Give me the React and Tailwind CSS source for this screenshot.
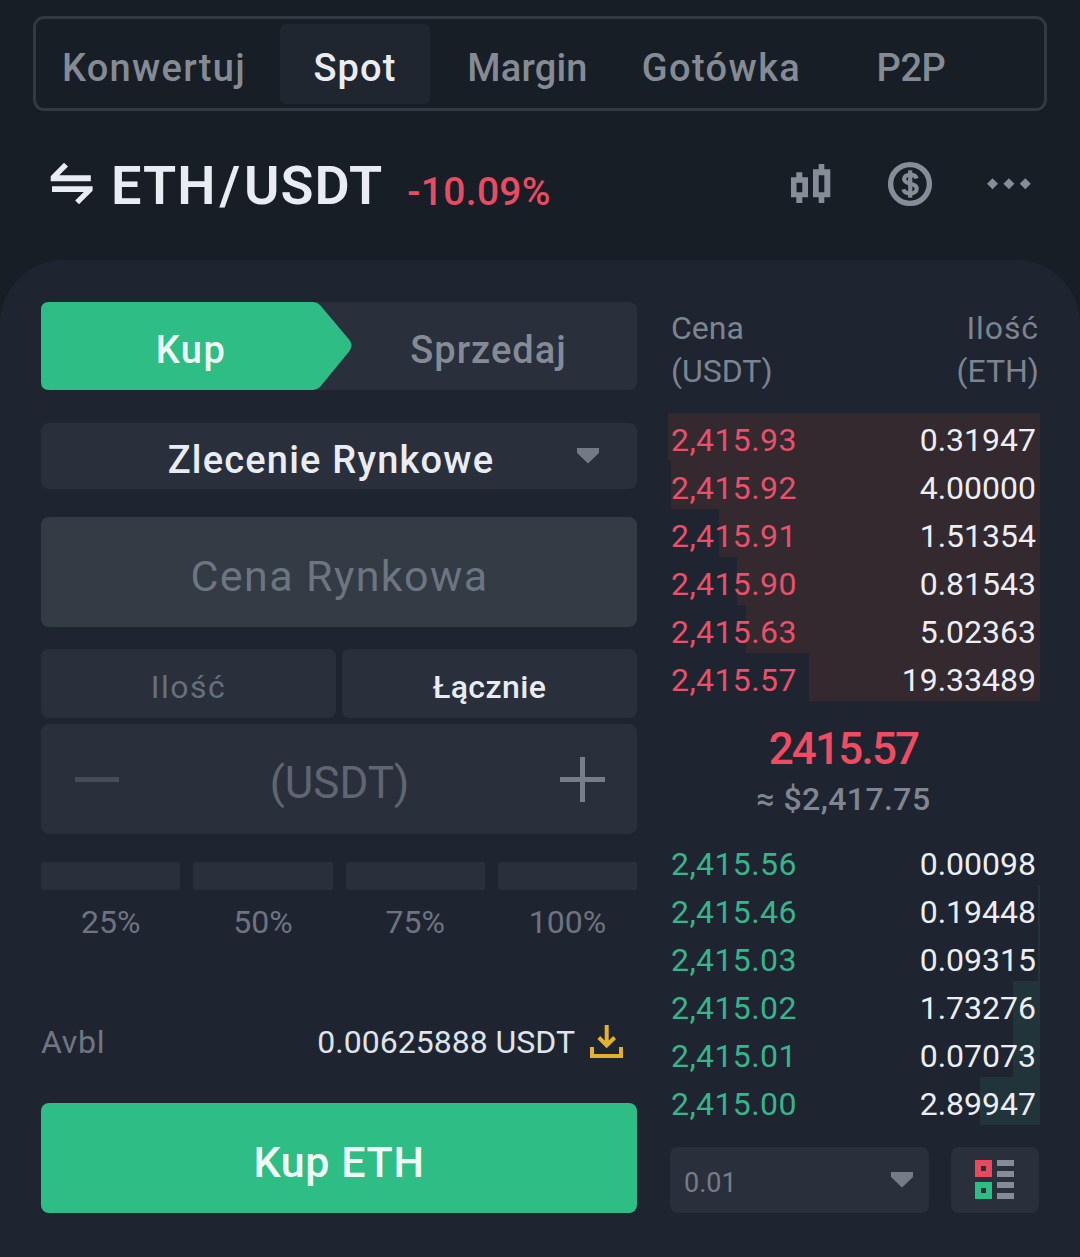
import React, { useState } from "react";
import clsx from "clsx";

const MARKETS = [
  { name: "Konwertuj", box: "w-[236px] mr-2 tracking-[1.3px]" },
  { name: "Spot", box: "w-[150px] tracking-[1.1px]" },
  { name: "Margin", box: "w-[195px] tracking-[0.2px]" },
  { name: "Gotówka", box: "w-[193px] tracking-[1.4px]" },
  { name: "P2P", box: "w-[186px] tracking-[-0.4px]" },
];

// depth = width of the bar behind the row, in px
const ASKS = [
  { price: "2,415.93", amount: "0.31947", depth: 372 },
  { price: "2,415.92", amount: "4.00000", depth: 369 },
  { price: "2,415.91", amount: "1.51354", depth: 321 },
  { price: "2,415.90", amount: "0.81543", depth: 303 },
  { price: "2,415.63", amount: "5.02363", depth: 294 },
  { price: "2,415.57", amount: "19.33489", depth: 231 },
];

const BIDS = [
  { price: "2,415.56", amount: "0.00098", depth: 0 },
  { price: "2,415.46", amount: "0.19448", depth: 2 },
  { price: "2,415.03", amount: "0.09315", depth: 2 },
  { price: "2,415.02", amount: "1.73276", depth: 27 },
  { price: "2,415.01", amount: "0.07073", depth: 27 },
  { price: "2,415.00", amount: "2.89947", depth: 60 },
];

const PERCENTS = ["25%", "50%", "75%", "100%"];

function SwapIcon() {
  return (
    <svg width="44" height="44" viewBox="0 0 44 44" fill="currentColor">
      <path d="M.7 14.2 14 .7 18 4.400 9.300 13.200H40.800V19.300H.700z" />
      <path d="M2 24.300H42.600V28.800L29 42.300 25.200 38.600 33.800 30H2z" />
    </svg>
  );
}

function CandlesIcon() {
  return (
    <svg width="40" height="40" viewBox="0 0 40 40" fill="currentColor">
      <path
        fillRule="evenodd"
        d="M5.3 8.3h6v5H17v20h-5.7V39h-6v-5.7H0v-20h5.3zM5.5 18.7v9.6h5.8v-9.6zM27.7 0h5.6v5.3h6v28h-6V39h-5.6v-5.7H22v-28h5.7zM27.7 11.3v17h5.6v-17z"
      />
    </svg>
  );
}

function DollarIcon() {
  return (
    <svg width="46" height="46" viewBox="0 0 46 46" fill="none" stroke="currentColor">
      <circle cx="23" cy="23" r="19.4" strokeWidth="5.4" />
      <path
        d="M29.6 17.4c-.6-2.4-2.8-3.6-6.4-3.6-3.8 0-6.1 1.6-6.1 4.3 0 6.2 12.6 3.2 12.6 9.6 0 2.9-2.5 4.7-6.5 4.7-3.8 0-6.2-1.4-6.7-4"
        strokeWidth="4.2"
      />
      <path d="M23.2 9.3v27.4" strokeWidth="4.2" />
    </svg>
  );
}

function MoreIcon() {
  return (
    <svg width="44" height="12" viewBox="0 0 44 12" fill="currentColor">
      <path d="M5.5.3 11 5.8 5.5 11.3 0 5.8zM21.9.3l5.5 5.5-5.5 5.5-5.5-5.5zM38.3.3l5.5 5.5-5.5 5.5-5.5-5.5z" />
    </svg>
  );
}

function Caret({ className }) {
  return (
    <svg className={className} width="22" height="16" viewBox="0 0 22 16" fill="currentColor">
      <path d="M0 0h22v5L11 15.5 0 5z" />
    </svg>
  );
}

function DepositIcon() {
  return (
    <svg width="33" height="33" viewBox="0 0 33 33" fill="none" stroke="#e3b12c" strokeWidth="4">
      <path d="M2 22v9h29v-9M16.7 0v20M8.8 12.5l7.9 7.9 7.9-7.9" />
    </svg>
  );
}

function BookIcon() {
  return (
    <svg width="40" height="40" viewBox="0 0 40 40">
      <path fill="#e8495f" fillRule="evenodd" d="M0 0h17v17H0zM6 6v5h5V6z" />
      <path fill="#2ebd85" fillRule="evenodd" d="M0 22h17v17H0zM6 28v5h5v-5z" />
      <path fill="#868c97" d="M22 0h17v6H22zM22 11h17v6H22zM22 22h17v6H22zM22 33h17v6H22z" />
    </svg>
  );
}

function BookRow({ row, side }) {
  return (
    <div className="relative flex h-12 items-center justify-between pt-[5px] pr-[4px] pl-px text-[32px]">
      <div
        className={clsx("absolute inset-y-0 right-0", side === "ask" ? "bg-[#352930]" : "bg-[#213439]")}
        style={{ width: row.depth }}
      />
      <span className={clsx("relative tracking-[0.4px]", side === "ask" ? "text-[#e9506a]" : "text-[#38b48a]")}>
        {row.price}
      </span>
      <span className="relative text-[#eceef4]">{row.amount}</span>
    </div>
  );
}

export default function App() {
  const [market, setMarket] = useState("Spot");
  const [unit, setUnit] = useState("Łącznie");

  return (
    <div className="flex h-[1257px] w-[1080px] flex-col overflow-hidden bg-[#181e26] font-['Roboto',sans-serif] leading-none">
      {/* Market tabs */}
      <nav className="mt-4 ml-[33px] flex h-[95px] w-[1014px] items-center rounded-[11px] border-3 border-[#333941]">
        {MARKETS.map((m) => (
          <button
            key={m.name}
            onClick={() => setMarket(m.name)}
            className={clsx(
              "flex h-20 items-center justify-center rounded-md pt-2 text-[38px] font-medium",
              m.box,
              m.name === market ? "bg-[#20262f] text-[#eaecf2]" : "text-[#848b95]"
            )}
          >
            {m.name}
          </button>
        ))}
      </nav>

      {/* Pair header */}
      <header className="mt-12 flex h-[50px] items-center pr-[49px] pl-[50px] text-[#868d98]">
        <span className="text-[#e9ecf3]">
          <SwapIcon />
        </span>
        <h1 className="ml-[17px] pt-[3px] text-[54px] font-semibold tracking-[1px] text-[#e9ecf3]">
          ETH<span className="mx-[3px]">/</span>USDT
        </h1>
        <span className="ml-[24px] pt-[17px] text-[39px] font-medium tracking-[0.3px] text-[#e84c63]">-10.09%</span>
        <div className="ml-auto flex items-center">
          <CandlesIcon />
          <span className="ml-[56px]">
            <DollarIcon />
          </span>
          <span className="ml-[54px]">
            <MoreIcon />
          </span>
        </div>
      </header>

      <main className="mt-[51px] flex flex-1 rounded-t-[64px] bg-[#1f2530] pt-[42px] pr-10 pl-[41px]">
        {/* Order form */}
        <section className="flex w-[596px] flex-col">
          <div className="relative flex h-[88px] rounded-lg bg-[#2a303b] pt-2 text-[38px] font-medium tracking-[1px]">
            <svg className="absolute top-0 left-0" width="311" height="88" viewBox="0 0 311 88" fill="#2ebd85">
              <path d="M8 0H272q4 0 7 3L308.5 38q4 5 0 11L279 85q-3 3-7 3H8q-8 0-8-8V8q0-8 8-8z" />
            </svg>
            <button className="relative w-[300px] tracking-[1.5px] text-[#effaf5]">Kup</button>
            <button className="w-[295px] text-[#848b97]">Sprzedaj</button>
          </div>

          <div className="mt-[33px] flex h-[66px] items-center rounded-lg bg-[#2a303b] pr-[38px] pl-[44px]">
            <span className="flex-1 pt-2 text-center text-[38px] font-medium tracking-[1.2px] text-[#e9ecf3]">
              Zlecenie Rynkowe
            </span>
            <Caret className="text-[#737a86]" />
          </div>

          <div className="mt-7 flex h-[110px] items-center justify-center rounded-lg bg-[#333b45] pt-2 pl-px text-[43px] tracking-[1.4px] text-[#6c7580]">
            Cena Rynkowa
          </div>

          <div className="mt-[22px] grid h-[69px] grid-cols-2 gap-[6px] text-[32px]">
            {["Ilość", "Łącznie"].map((u) => (
              <button
                key={u}
                onClick={() => setUnit(u)}
                className={clsx(
                  "rounded-lg bg-[#2a303b] pt-[7px]",
                  u === unit ? "font-medium tracking-[0.4px] text-[#e9ecf3]" : "tracking-[1.5px] text-[#66707b]"
                )}
              >
                {u}
              </button>
            ))}
          </div>

          <div className="mt-[6px] flex h-[110px] items-center justify-between rounded-lg bg-[#2a303b] pr-8 pl-[34px]">
            <span className="h-[5px] w-[44px] bg-[#454e58]" />
            <span className="pt-2 text-[44px] text-[#5f6671]">(USDT)</span>
            <svg width="45" height="45" viewBox="0 0 45 45" stroke="#777e8a" strokeWidth="5">
              <path d="M22.5 0v45M0 22.5h45" />
            </svg>
          </div>

          <div className="mt-7 grid grid-cols-4 gap-[13px] text-center text-[32px] text-[#6d7480]">
            {PERCENTS.map((p) => (
              <div key={p}>
                <div className="h-7 rounded-[3px] bg-[#2a303b]" />
                <div className="mt-[16px]">{p}</div>
              </div>
            ))}
          </div>

          <div className="mt-[86px] flex h-[34px] items-center pr-[14px] text-[32px]">
            <span className="pt-[2px] tracking-[0.7px] text-[#6f7682]">Avbl</span>
            <span className="mr-[15px] ml-auto pt-[2px] text-[#dfe3ec]">0.00625888 USDT</span>
            <DepositIcon />
          </div>

          <button className="mt-[45px] h-[110px] rounded-lg bg-[#2ebd85] pt-[9px] text-[43px] font-medium tracking-[0.6px] text-[#effaf5]">
            Kup ETH
          </button>
        </section>

        {/* Order book */}
        <section className="ml-[33px] flex w-[370px] flex-col">
          <div className="mt-[5px] flex justify-between px-px text-[32px] leading-[43px] text-[#7c8490]">
            <div>
              Cena
              <br />
              (USDT)
            </div>
            <div className="text-right">
              <span className="tracking-[0.9px]">Ilość</span>
              <br />
              (ETH)
            </div>
          </div>

          <div className="mt-[20px]">
            {ASKS.map((row) => (
              <BookRow key={row.price} row={row} side="ask" />
            ))}
          </div>

          <div className="flex h-[136px] flex-col items-center pt-[26px] pr-[23px]">
            <span className="text-[44px] font-medium tracking-[-1.8px] text-[#ef4c63]">2415.57</span>
            <span className="mt-[12px] text-[32px] font-medium tracking-[0.4px] text-[#7f8692]">≈ $2,417.75</span>
          </div>

          <div>
            {BIDS.map((row) => (
              <BookRow key={row.price} row={row} side="bid" />
            ))}
          </div>

          <div className="mt-[22px] flex h-[66px] justify-between pr-px">
            <div className="flex w-[259px] items-center justify-between rounded-lg bg-[#2a303b] pr-4 pl-[14px] text-[27px] text-[#757c88]">
              <span className="pt-[6px]">0.01</span>
              <Caret />
            </div>
            <button className="flex w-[88px] items-center justify-center rounded-lg bg-[#2a303b]">
              <BookIcon />
            </button>
          </div>
        </section>
      </main>
    </div>
  );
}
